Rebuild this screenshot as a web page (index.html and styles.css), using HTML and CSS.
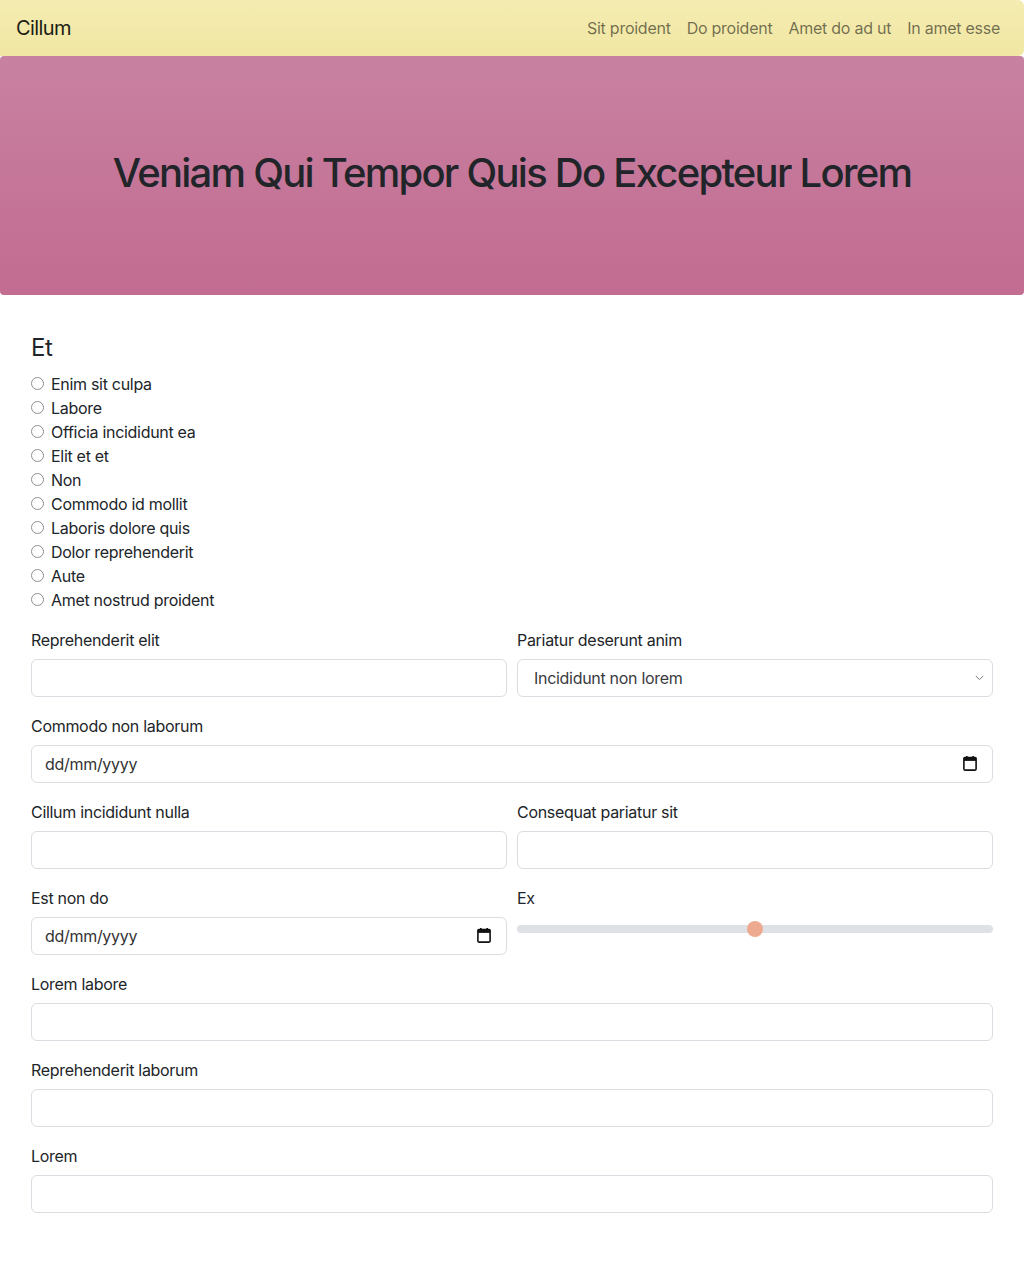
FILE: index.html
```html
<!DOCTYPE html>
<html lang="en">
<head>
<meta charset="utf-8">
<title>Cillum</title>
<link rel="stylesheet" href="styles.css">
</head>
<body>
<nav class="navbar">
  <a class="brand" href="#">Cillum</a>
  <ul class="nav-links">
    <li><a href="#">Sit proident</a></li>
    <li><a href="#">Do proident</a></li>
    <li><a href="#">Amet do ad ut</a></li>
    <li><a href="#">In amet esse</a></li>
  </ul>
</nav>
<header class="hero">
  <h1>Veniam Qui Tempor Quis Do Excepteur Lorem</h1>
</header>
<main class="container">
  <h4 class="section-title">Et</h4>
  <div class="radios">
    <label class="radio"><input type="radio" name="et"> Enim sit culpa</label>
    <label class="radio"><input type="radio" name="et"> Labore</label>
    <label class="radio"><input type="radio" name="et"> Officia incididunt ea</label>
    <label class="radio"><input type="radio" name="et"> Elit et et</label>
    <label class="radio"><input type="radio" name="et"> Non</label>
    <label class="radio"><input type="radio" name="et"> Commodo id mollit</label>
    <label class="radio"><input type="radio" name="et"> Laboris dolore quis</label>
    <label class="radio"><input type="radio" name="et"> Dolor reprehenderit</label>
    <label class="radio"><input type="radio" name="et"> Aute</label>
    <label class="radio"><input type="radio" name="et"> Amet nostrud proident</label>
  </div>

  <div class="row">
    <div class="field">
      <label class="form-label">Reprehenderit elit</label>
      <input class="form-control" type="text">
    </div>
    <div class="field">
      <label class="form-label">Pariatur deserunt anim</label>
      <div class="select">
        <span>Incididunt non lorem</span>
        <svg width="9" height="6" viewBox="0 0 9 6"><path d="M0.8 1 L4.5 4.6 L8.2 1" fill="none" stroke="#777" stroke-width="1"/></svg>
      </div>
    </div>
  </div>

  <div class="field">
    <label class="form-label">Commodo non laborum</label>
    <div class="form-control date">
      <span>dd/mm/yyyy</span>
      <svg class="cal" width="14" height="15" viewBox="0 0 14 15"><rect x="0.9" y="1.5" width="12.2" height="12.6" rx="1" fill="none" stroke="#111" stroke-width="1.6"/><rect x="0.9" y="1.5" width="12.2" height="3.4" fill="#111"/><rect x="3" y="0" width="1.6" height="2.5" fill="#111"/><rect x="9.4" y="0" width="1.6" height="2.5" fill="#111"/></svg>
    </div>
  </div>

  <div class="row">
    <div class="field">
      <label class="form-label">Cillum incididunt nulla</label>
      <input class="form-control" type="text">
    </div>
    <div class="field">
      <label class="form-label">Consequat pariatur sit</label>
      <input class="form-control" type="text">
    </div>
  </div>

  <div class="row">
    <div class="field">
      <label class="form-label">Est non do</label>
      <div class="form-control date">
        <span>dd/mm/yyyy</span>
        <svg class="cal" width="14" height="15" viewBox="0 0 14 15"><rect x="0.9" y="1.5" width="12.2" height="12.6" rx="1" fill="none" stroke="#111" stroke-width="1.6"/><rect x="0.9" y="1.5" width="12.2" height="3.4" fill="#111"/><rect x="3" y="0" width="1.6" height="2.5" fill="#111"/><rect x="9.4" y="0" width="1.6" height="2.5" fill="#111"/></svg>
      </div>
    </div>
    <div class="field">
      <label class="form-label">Ex</label>
      <input class="form-range" type="range" min="0" max="100" value="50">
    </div>
  </div>

  <div class="field">
    <label class="form-label">Lorem labore</label>
    <input class="form-control" type="text">
  </div>
  <div class="field">
    <label class="form-label">Reprehenderit laborum</label>
    <input class="form-control" type="text">
  </div>
  <div class="field">
    <label class="form-label">Lorem</label>
    <input class="form-control" type="text">
  </div>
</main>
</body>
</html>
```

FILE: styles.css
```css
* { box-sizing: border-box; }
html, body { margin: 0; padding: 0; }
body {
  font-family: Inter, "Noto Sans", "Liberation Sans", sans-serif;
  font-size: 16px;
  line-height: 24px;
  color: #212529;
  background: #fff;
  letter-spacing: -0.3px;
}
.navbar {
  height: 56px;
  display: flex;
  align-items: center;
  justify-content: space-between;
  padding: 0 16px;
  background: linear-gradient(180deg, #f4ecb2 0%, #f1e6a2 100%);
  border-radius: 0 6px 6px 0;
}
.brand {
  font-size: 20px;
  color: #1c1c14;
  text-decoration: none;
  letter-spacing: -0.6px;
}
.nav-links {
  display: flex;
  list-style: none;
  margin: 0;
  padding: 0;
}
.nav-links a {
  display: block;
  padding: 8px;
  color: rgba(0, 0, 0, 0.55);
  text-decoration: none;
  letter-spacing: -0.25px;
}
.hero {
  height: 239px;
  display: flex;
  align-items: center;
  justify-content: center;
  padding-bottom: 5px;
  background: linear-gradient(180deg, #c881a1 0%, #c26c91 100%);
  border-radius: 4px;
}
.hero h1 {
  margin: 0;
  font-size: 40px;
  line-height: 48px;
  font-weight: 500;
  color: #212529;
  letter-spacing: -1.75px;
}
.container {
  padding: 38px 31px 40px;
}
.section-title {
  margin: 0 0 10px;
  font-size: 24px;
  line-height: 29px;
  font-weight: 400;
  letter-spacing: -0.5px;
}
.radios {
  display: flex;
  flex-direction: column;
  margin-bottom: 16px;
}
.radio {
  display: flex;
  align-items: center;
  gap: 7px;
  height: 24px;
}
.radio input {
  appearance: none;
  -webkit-appearance: none;
  width: 13px;
  height: 13px;
  margin: 0 0 2px;
  border: 1px solid #8e8e93;
  border-radius: 50%;
  background: #fff;
}
.row {
  display: grid;
  grid-template-columns: 1fr 1fr;
  column-gap: 10px;
}
.field {
  margin-bottom: 17px;
}
.form-label {
  display: block;
  margin-bottom: 7px;
}
.form-control {
  display: block;
  width: 100%;
  height: 38px;
  padding: 6px 12px;
  font: inherit;
  color: #212529;
  background: #fff;
  border: 1px solid #dcdde2;
  border-radius: 6px;
  outline: none;
}
.date {
  display: flex;
  align-items: center;
  justify-content: space-between;
  padding: 0 15px 0 13px;
  color: #333;
}
.cal { margin-top: -1px; }
.select {
  display: flex;
  align-items: center;
  justify-content: space-between;
  height: 38px;
  padding: 0 8px 0 16px;
  border: 1px solid #dcdde2;
  border-radius: 6px;
  color: #3a3a3f;
}
.form-range {
  display: block;
  width: 100%;
  height: 24px;
  margin: 0 0 1px;
  padding: 0;
  appearance: none;
  -webkit-appearance: none;
  background: transparent;
}
.form-range::-webkit-slider-runnable-track {
  height: 8px;
  background: #dee2e6;
  border-radius: 4px;
}
.form-range::-webkit-slider-thumb {
  -webkit-appearance: none;
  appearance: none;
  width: 16px;
  height: 16px;
  margin-top: -4px;
  border: 0;
  border-radius: 50%;
  background: #eeaa90;
}
```
